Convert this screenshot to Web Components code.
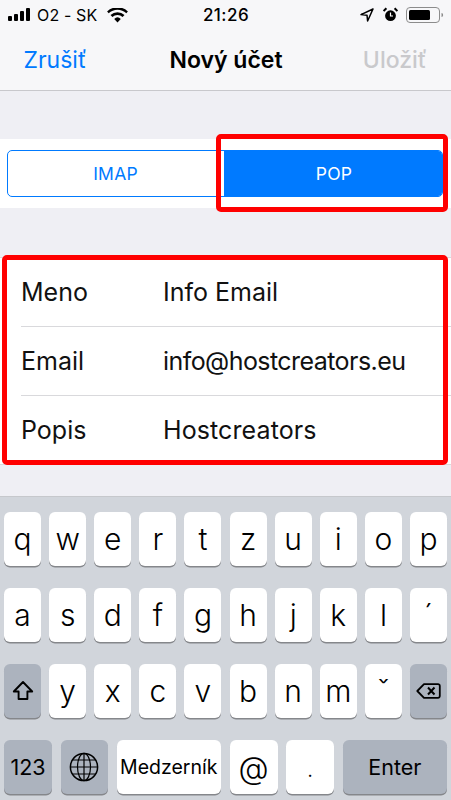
<!DOCTYPE html>
<html lang="sk"><head><meta charset="utf-8"><title>Nový účet</title>
<style>
html,body{margin:0;padding:0;background:#efeff4}
body{font-family:Inter,"Noto Sans",sans-serif;color:#000}
</style></head><body>
<mail-screen>
<status-bar slot="status"></status-bar>
<nav-bar slot="nav" cancel="Zrušiť" title-text="Nový účet" save="Uložiť"></nav-bar>
<seg-control slot="seg"></seg-control>
<form-group slot="form">
<form-row label="Meno" value="Info Email"></form-row>
<form-row label="Email" value="info@hostcreators.eu" style="--ls:-.56px"></form-row>
<form-row label="Popis" value="Hostcreators" style="--ls:.1px"></form-row>
</form-group>
<ios-keyboard slot="kb"></ios-keyboard>
</mail-screen>
<script>
function def(name, html, init){
  customElements.define(name, class extends HTMLElement{
    constructor(){super();const r=this.attachShadow({mode:'open'});r.innerHTML=html;}
    connectedCallback(){ if(init) init(this,this.shadowRoot); }
  });
}
def('mail-screen',`<style>
:host{display:flex;flex-direction:column;width:451px;height:800px;overflow:hidden;position:relative;background:#efeff4}
.seg{margin-top:48px}.form{margin-top:49px}.kb{margin-top:auto}
.hl{position:absolute;border:5px solid #f00;border-radius:5px;box-sizing:border-box;pointer-events:none}
.h1{left:216px;top:134px;width:232px;height:78px}
.h2{left:2px;top:255px;width:446px;height:210px}
</style>
<slot name="status"></slot><slot name="nav"></slot>
<div class="seg"><slot name="seg"></slot></div>
<div class="form"><slot name="form"></slot></div>
<div class="kb"><slot name="kb"></slot></div>
<div class="hl h1"></div><div class="hl h2"></div>`);

def('status-bar',`<style>
:host{display:flex;align-items:center;height:30px;background:#f7f7f9;font:400 16px/30px Inter,sans-serif;padding:0 7px 0 8px;position:relative;box-sizing:border-box;width:451px}
.l,.r{display:flex;align-items:center;flex:1}
.r{justify-content:flex-end}
.t{font-weight:500;font-size:17px;letter-spacing:.45px;position:absolute;left:0;right:0;text-align:center;padding-left:1px}
svg{display:block}
</style>
<div class="l">
<svg width="25" height="14" viewBox="0 0 25 14" style="margin-right:5px"><g fill="#000"><rect x="0" y="8" width="4" height="5" rx="1"/><rect x="6" y="6" width="4" height="7" rx="1"/><rect x="12" y="3" width="4" height="10" rx="1"/><rect x="18" y="0" width="4" height="13" rx="1"/></g></svg>
<span style="margin-left:-1px;letter-spacing:.15px">O2 - SK</span>
<svg width="21" height="15" viewBox="0 0 21 15" style="margin-left:10px"><path d="M10.5 14.5 7.2 10.9a4.8 4.8 0 0 1 6.6 0ZM5.4 9A7.4 7.4 0 0 1 15.6 9L17.5 7A10.2 10.2 0 0 0 3.5 7ZM1.7 5.2A12.7 12.7 0 0 1 19.3 5.2L20.9 3.4A15.2 15.2 0 0 0 .1 3.4Z" fill="#000"/></svg>
</div>
<span class="t">21:26</span>
<div class="r">
<svg width="14" height="14" viewBox="0 0 14 14" style="margin-right:9px"><path d="M13 1 1 6.6 7 7.2 7.6 13Z" fill="none" stroke="#000" stroke-width="1.5" stroke-linejoin="round"/></svg>
<svg width="15" height="16" viewBox="0 0 15 16" style="margin-right:8px"><circle cx="7.5" cy="8.7" r="5.4" fill="#000"/><path d="M7.5 5.5V9H10" stroke="#fff" stroke-width="1.2" fill="none"/><path d="M.6 4 3.4 1.2M14.4 4 11.6 1.2" stroke="#000" stroke-width="2"/></svg>
<svg width="38" height="17" viewBox="0 0 38 17"><rect x=".5" y=".5" width="33" height="15" rx="3.5" fill="none" stroke="#8c8c8c"/><rect x="3" y="3" width="21" height="10" rx="1.5" fill="#000"/><path d="M35.5 6c1 0 1.6.8 1.6 2s-.6 2-1.6 2Z" fill="#8c8c8c"/></svg>
</div>`);

def('nav-bar',`<style>
:host{display:flex;align-items:center;justify-content:space-between;height:61px;box-sizing:border-box;background:#f7f7f9;border-bottom:1px solid #c8c8cc;padding:0 24px 1px 23.5px;width:451px;position:relative;font-family:Inter,sans-serif;font-size:23px}
.c{color:#007aff}.s{color:#c9c9cc;font-weight:500}
.t{position:absolute;left:0;right:0;text-align:center;font-weight:600;font-size:23px;padding-left:1px}
</style><span class="c" id="a"></span><span class="t" id="b"></span><span class="s" id="d"></span>`,
(h,r)=>{r.getElementById('a').textContent=h.getAttribute('cancel');r.getElementById('b').textContent=h.getAttribute('title-text');r.getElementById('d').textContent=h.getAttribute('save');});

def('seg-control',`<style>
:host{display:block;background:#fff;padding:11px 8px 11px 7px;height:69px;box-sizing:border-box;width:451px}
.w{display:flex;height:47px;border:1px solid #007aff;border-radius:5px;overflow:hidden;box-sizing:border-box;font:400 17.5px Inter,sans-serif;letter-spacing:.2px}
.w div{display:flex;align-items:center;justify-content:center;color:#007aff}
.w .off{flex:0 0 216px;padding-right:1px;box-sizing:border-box}
.w .on{flex:1;background:#007aff;color:#fff;padding-left:2px}
</style><div class="w"><div class="off">IMAP</div><div class="on">POP</div></div>`);

def('form-group',`<style>
:host{display:block;background:#fff;width:451px;border-top:1px solid #d9d9dc;border-bottom:1px solid #d9d9dc;box-sizing:border-box}
</style><slot></slot>`);

def('form-row',`<style>
:host{display:block;padding-left:21px;font:400 25px Inter,sans-serif;color:#111}
:host(:not(:last-child)) .i{border-bottom:1px solid #d9d9dc}
.i{display:flex;align-items:center;height:69px;box-sizing:border-box;padding-bottom:1px}
:host(:last-child) .i{height:68px;padding-bottom:0}
.l{width:142px}
#v{letter-spacing:var(--ls,0)}
</style><div class="i"><span class="l" id="l"></span><span id="v"></span></div>`,
(h,r)=>{r.getElementById('l').textContent=h.getAttribute('label');r.getElementById('v').textContent=h.getAttribute('value');});

def('kb-key',`<style>
:host{display:flex;align-items:center;justify-content:center;height:54px;flex:1 1 0;min-width:0;box-sizing:border-box;background:#fff;border-radius:6px;box-shadow:0 1.5px 0 #85878b;font:300 30px Inter,sans-serif;color:#000}
:host([dark]){background:#acb3be}
:host([small]){font-size:19.5px;font-weight:400}
:host([mid]){font-size:21.5px;font-weight:400}
::slotted(svg){display:block}
</style><slot></slot>`);

const K=(s,a='')=>`<kb-key ${a}>${s}</kb-key>`;
const shift=`<svg width="22" height="22" viewBox="0 0 22 22"><path d="M11 2 1.8 11.5H6.6V19H15.4V11.5H20.2Z" fill="none" stroke="#000" stroke-width="1.9" stroke-linejoin="round"/></svg>`;
const del=`<svg width="25" height="16" viewBox="0 0 25 16"><path d="M8 1.2H22a1.8 1.8 0 0 1 1.8 1.8V13a1.8 1.8 0 0 1-1.8 1.8H8L1.3 8Z" fill="none" stroke="#000" stroke-width="1.8" stroke-linejoin="round"/><path d="M12 4.5 18.5 11.5M18.5 4.5 12 11.5" stroke="#000" stroke-width="2" fill="none"/></svg>`;
const globe=`<svg width="30" height="30" viewBox="0 0 30 30" fill="none" stroke="#000" stroke-width="1.2"><circle cx="15" cy="15" r="13.6" stroke-width="1.5"/><ellipse cx="15" cy="15" rx="6.5" ry="13.6"/><path d="M15 1.4V28.6M1.4 15H28.6M3.4 8H26.6M3.4 22H26.6"/></svg>`;
def('ios-keyboard',`<style>
:host{display:flex;flex-direction:column;gap:22px;box-sizing:border-box;width:451px;height:304px;background:#d1d5db;border-top:1px solid #c6c8cc;padding:15px 4px 0 4px}
.r{display:flex;gap:8.1px}
#r4{gap:8.6px}
</style><div class="r" id="r1"></div><div class="r" id="r2"></div><div class="r" id="r3"></div><div class="r" id="r4"></div>`,
(h,r)=>{
 const $=i=>r.getElementById(i);
 $('r1').innerHTML=[...'qwertzuiop'].map(c=>K(c)).join('');
 $('r2').innerHTML=[...'asdfghjkl´'].map(c=>K(c)).join('');
 $('r3').innerHTML=K(shift,'dark')+[...'yxcvbnmˇ'].map(c=>K(c)).join('')+K(del,'dark');
 $('r4').innerHTML=K('123','dark mid style="flex:0 0 48px"')+K(globe,'dark style="flex:0 0 47.4px"')+K('Medzerník','small style="flex:0 0 104.4px"')+K('@','style="flex:0 0 48px;font-size:31px"')+K('.','style="flex:0 0 48px;font-size:22px;padding-top:4px"')+K('Enter','dark mid style="flex:1 1 0"');
});
</script>
</body></html>
